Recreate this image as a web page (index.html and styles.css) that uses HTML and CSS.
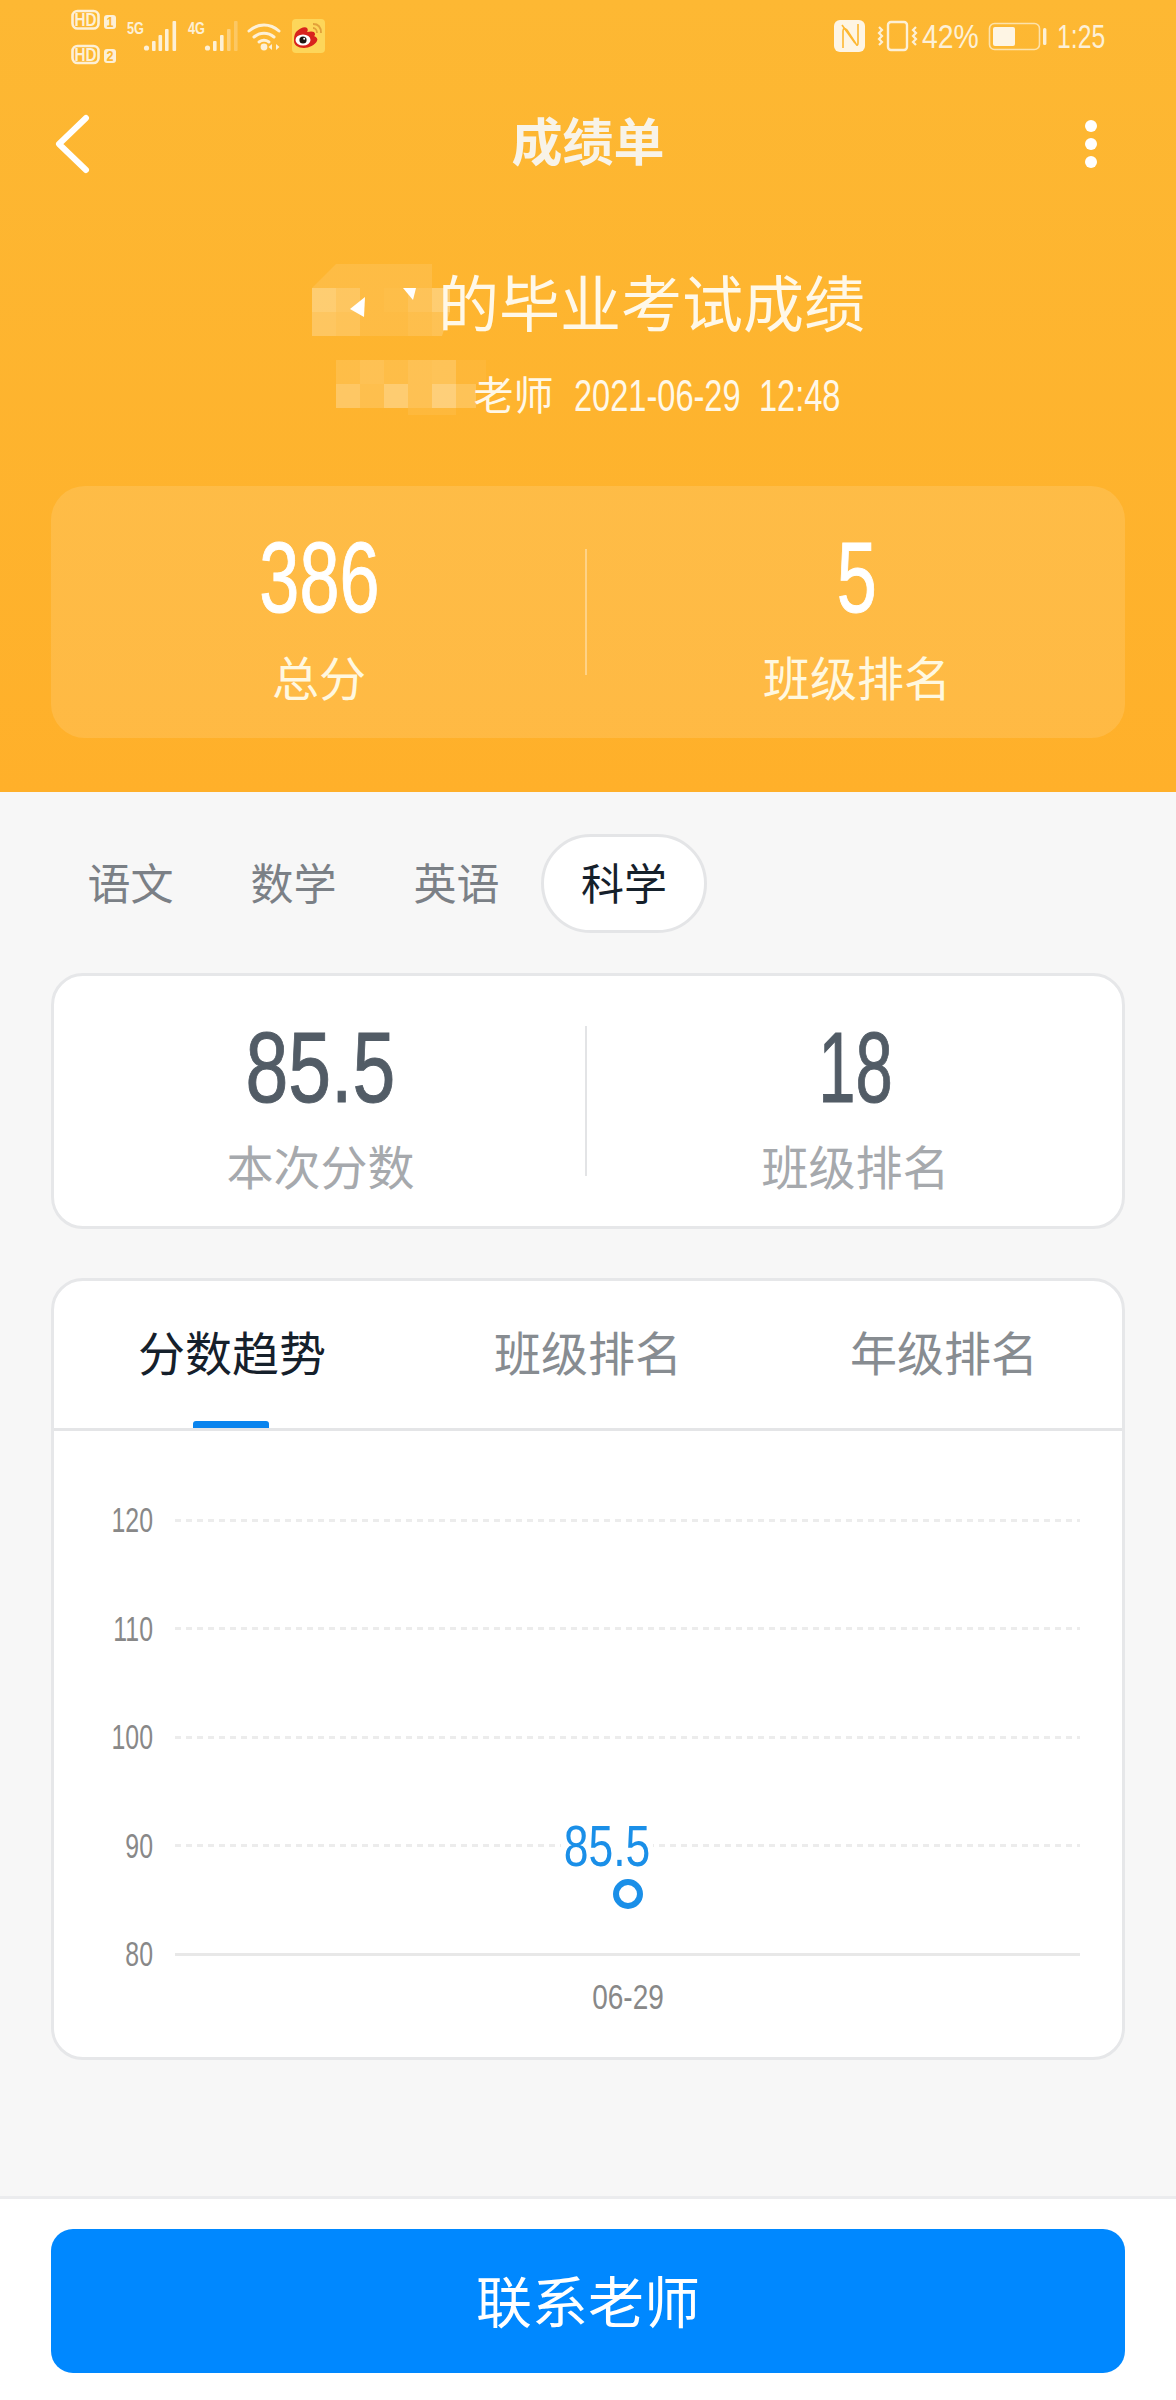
FILE: index.html
```html
<!DOCTYPE html>
<html lang="zh-CN">
<head>
  <meta charset="UTF-8" />
  <meta name="viewport" content="width=device-width, initial-scale=1.0"/>
  <title>成绩单</title>
  <link rel="stylesheet" href="styles.css">
</head>
<body>
  <header class="header">
    <div class="status">
      <svg class="status-left" viewBox="60 0 280 72" width="280" height="72">
        <g fill="none" stroke="#fdf0d6" stroke-width="2.6">
          <rect x="72.5" y="11" width="26" height="17.5" rx="5"/>
          <rect x="72.5" y="46" width="26" height="17" rx="5"/>
        </g>
        <g fill="#fdf0d6">
          <text class="hd" x="74.5" y="25.5" textLength="22" lengthAdjust="spacingAndGlyphs">HD</text>
          <text class="hd" x="74.5" y="60.5" textLength="22" lengthAdjust="spacingAndGlyphs">HD</text>
          <rect x="104" y="15" width="12" height="14" rx="3"/>
          <rect x="104" y="49" width="12" height="14" rx="3"/>
        </g>
        <g fill="#fdb833">
          <text class="sim" x="106.5" y="27" textLength="7" lengthAdjust="spacingAndGlyphs">1</text>
          <text class="sim" x="106.5" y="61" textLength="7" lengthAdjust="spacingAndGlyphs">2</text>
        </g>
        <g fill="#fdf0d6">
          <text class="net" x="127" y="34" textLength="17" lengthAdjust="spacingAndGlyphs">5G</text>
          <circle cx="146.5" cy="48" r="2.6"/>
          <rect x="152" y="41" width="3.6" height="10" rx="1"/>
          <rect x="158.5" y="35" width="3.6" height="16" rx="1"/>
          <rect x="165" y="29" width="3.6" height="22" rx="1"/>
          <rect x="172.5" y="21" width="3.6" height="30" rx="1"/>
          <text class="net" x="188" y="34" textLength="17" lengthAdjust="spacingAndGlyphs">4G</text>
          <circle cx="207.5" cy="48" r="2.6"/>
          <rect x="213" y="41" width="3.6" height="10" rx="1"/>
          <rect x="220" y="35" width="3.6" height="16" rx="1"/>
          <rect x="227" y="29" width="3.6" height="22" rx="1" opacity=".45"/>
          <rect x="234" y="21" width="3.6" height="30" rx="1" opacity=".3"/>
          <circle cx="264" cy="47" r="3.4"/>
          <path d="M272 44v6l-3.5-3zM276 44v6l3.5-3z"/>
        </g>
        <g fill="none" stroke="#fdf0d6" stroke-width="3" stroke-linecap="round">
          <path d="M249 31c9-8 21-8 30 0"/>
          <path d="M254 37c6-5 14-5 20 0"/>
          <path d="M259 42c3-2 7-2 10 0"/>
        </g>
        <rect x="292" y="19" width="33" height="34" rx="4" fill="#fdd65a"/>
        <path d="M296 32c4-4 9-6 11-4c1 1 1 3 0 4c4-1 8-1 8 2c0 1 0 1-1 2c3 1 4 3 3 5c-2 4-8 7-13 7c-6 0-10-3-10-7c0-3 0-6 2-9z" fill="#d8231d"/>
        <ellipse cx="303" cy="40" rx="7.5" ry="5.5" fill="#fff"/>
        <circle cx="303" cy="40" r="3.6" fill="#1c1512"/>
        <circle cx="304.2" cy="38.8" r="1" fill="#fff"/>
        <g fill="none" stroke="#e2a03a" stroke-width="1.8">
          <path d="M313 24c5 0 8 3 8 9"/>
          <path d="M313 28c2 0 4 2 4 5"/>
        </g>
      </svg>
      <div class="status-right">
        <svg class="status-icons" viewBox="830 10 90 50" width="90" height="50">
          <rect x="834" y="20" width="31" height="32" rx="6" fill="#fef5e4"/>
          <g fill="none" stroke="#fdb833" stroke-width="1.6">
            <path d="M843 48V31c0-3 2-3 4-1l9 14c1 2 2 1 2-1V24"/>
            <path d="M842 25l13 18"/>
          </g>
          <rect x="888" y="22" width="19" height="28" rx="3" fill="none" stroke="#fdf0d6" stroke-width="2.4"/>
          <g fill="none" stroke="#fdf0d6" stroke-width="2.2">
            <path d="M879 27l3 3l-3 3l3 3l-3 3l3 3l-3 3"/>
            <path d="M916 27l-3 3l3 3l-3 3l3 3l-3 3l3 3"/>
          </g>
        </svg>
        <span class="status-text batt-text">42%</span>
        <svg class="status-batt" viewBox="985 15 65 45" width="65" height="45">
          <rect x="989.5" y="23.5" width="50" height="26" rx="5" fill="none" stroke="#fde2ab" stroke-width="1.6"/>
          <rect x="993" y="27" width="22" height="19" rx="2" fill="#fef5e4"/>
          <rect x="1043" y="28" width="3.4" height="17" rx="1.5" fill="#fdf0d6"/>
        </svg>
        <span class="status-text time-text">1:25</span>
      </div>
    </div>

    <nav class="nav">
      <svg class="back" viewBox="0 0 36 60" width="36" height="60">
        <polyline points="31,4 4,30 31,56" fill="none" stroke="#fff" stroke-width="6" stroke-linecap="round" stroke-linejoin="round"/>
      </svg>
      <div class="nav-title">成绩单</div>
      <div class="more"><i></i><i></i><i></i></div>
    </nav>

    <div class="heading">
      <svg class="mosaic" viewBox="0 0 144 72" width="144" height="72">
        <g fill="#fff">
          <path d="M24 0H120V24H0z" opacity=".1"/>
          <rect x="0" y="24" width="24" height="24" opacity=".32"/>
          <rect x="24" y="24" width="24" height="24" opacity=".24"/>
          <rect x="48" y="24" width="24" height="24" opacity=".1"/>
          <rect x="72" y="24" width="24" height="24" opacity=".12"/>
          <rect x="96" y="24" width="24" height="24" opacity=".2"/>
          <rect x="120" y="24" width="18" height="24" opacity=".32"/>
          <rect x="0" y="48" width="24" height="24" opacity=".24"/>
          <rect x="24" y="48" width="24" height="24" opacity=".2"/>
          <rect x="48" y="48" width="24" height="24" opacity=".1"/>
          <rect x="72" y="48" width="24" height="24" opacity=".1"/>
          <rect x="96" y="48" width="24" height="24" opacity=".14"/>
          <path d="M120 48h18l-8 24h-10z" opacity=".18"/>
          <path d="M53 33l-1 20l-14-8z"/>
          <path d="M104 24h-13l10 12z"/>
        </g>
      </svg>
      <h1 class="heading-text">的毕业考试成绩</h1>
    </div>
    <div class="meta">
      <svg class="mosaic-small" viewBox="0 0 150 55" width="150" height="55">
        <g fill="#fff">
          <rect x="0" y="0" width="24" height="24" opacity=".12"/>
          <rect x="24" y="0" width="24" height="24" opacity=".18"/>
          <rect x="48" y="0" width="24" height="24" opacity=".12"/>
          <rect x="72" y="0" width="24" height="24" opacity=".18"/>
          <rect x="96" y="0" width="24" height="24" opacity=".2"/>
          <rect x="120" y="0" width="30" height="24" opacity=".05"/>
          <rect x="0" y="24" width="24" height="24" opacity=".26"/>
          <rect x="24" y="24" width="24" height="24" opacity=".15"/>
          <rect x="48" y="24" width="24" height="24" opacity=".32"/>
          <rect x="72" y="24" width="24" height="24" opacity=".18"/>
          <rect x="96" y="24" width="24" height="24" opacity=".36"/>
          <rect x="120" y="24" width="20" height="24" opacity=".2"/>
          <rect x="72" y="48" width="48" height="7" opacity=".07"/>
        </g>
      </svg>
      <span class="meta-name">老师</span>
      <span class="meta-date">2021-06-29</span>
      <span class="meta-time">12:48</span>
    </div>

    <section class="summary">
      <div class="stat">
        <div class="stat-num"><span class="num">386</span></div>
        <div class="stat-label">总分</div>
      </div>
      <div class="summary-line"></div>
      <div class="stat">
        <div class="stat-num"><span class="num">5</span></div>
        <div class="stat-label">班级排名</div>
      </div>
    </section>
  </header>

  <main class="main">
    <div class="subjects">
      <div class="subject">语文</div>
      <div class="subject">数学</div>
      <div class="subject">英语</div>
      <div class="subject active">科学</div>
    </div>

    <section class="card score">
      <div class="stat">
        <div class="stat-num"><span class="num wide">85.5</span></div>
        <div class="stat-label">本次分数</div>
      </div>
      <div class="score-line"></div>
      <div class="stat">
        <div class="stat-num"><span class="num tight">18</span></div>
        <div class="stat-label">班级排名</div>
      </div>
    </section>

    <section class="card trend">
      <div class="trend-tabs">
        <div class="trend-tab active">分数趋势</div>
        <div class="trend-tab">班级排名</div>
        <div class="trend-tab">年级排名</div>
      </div>
      <div class="chart">
        <div class="chart-row"><span class="axis">120</span><div class="grid-line"></div></div>
        <div class="chart-row"><span class="axis">110</span><div class="grid-line"></div></div>
        <div class="chart-row"><span class="axis">100</span><div class="grid-line"></div></div>
        <div class="chart-row"><span class="axis">90</span><div class="grid-line"></div></div>
        <div class="chart-row"><span class="axis">80</span><div class="base-line"></div></div>
        <div class="point-value">85.5</div>
        <div class="point"></div>
        <div class="point-date">06-29</div>
      </div>
    </section>
  </main>

  <footer class="footer">
    <button type="button" class="btn">联系老师</button>
  </footer>
</body>
</html>
```

FILE: styles.css
```css
* { box-sizing: border-box; }
body { margin: 0; width: 1176px; height: 2400px; display: flex; flex-direction: column; background: #f7f7f7; font-family: "Liberation Sans", "Noto Sans CJK SC", sans-serif; }

.header { height: 792px; flex: none; background: linear-gradient(180deg, #fdb833 0%, #ffb02a 100%); color: #fff; }

.status { height: 72px; display: flex; justify-content: space-between; }
.status-left { margin-left: 60px; }
.status-left text { font-family: "Liberation Sans", sans-serif; font-weight: bold; }
.hd { font-size: 19px; }
.sim { font-size: 14px; }
.net { font-size: 17px; }
.status-right { display: flex; align-items: flex-start; padding-right: 71px; }
.status-icons { margin-top: 10px; }
.status-batt { margin-top: 15px; margin-left: 6px; }
.status-text { display: block; margin-top: 20px; font-size: 33px; line-height: 33px; color: #fdf0d6; white-space: nowrap; transform-origin: left center; }
.batt-text { width: 57px; margin-left: 2px; transform: scaleX(.86); }
.time-text { width: 48px; margin-left: 7px; transform: scaleX(.75); }

.nav { height: 144px; display: grid; grid-template-columns: 1fr auto 1fr; align-items: center; padding: 0 67px; }
.back { margin-left: -12px; }
.nav-title { font-size: 51px; font-weight: bold; color: #f8f3e8; line-height: 66px; }
.more { justify-self: end; margin-right: 12px; display: flex; flex-direction: column; gap: 6px; }
.more i { display: block; width: 12px; height: 12px; border-radius: 50%; background: #fff; }

.heading { margin-top: 48px; height: 80px; display: flex; justify-content: center; padding-left: 4px; }
.mosaic { margin: 0 -18px 0 -3px; }
.heading-text { margin: 0; font-size: 61px; font-weight: normal; line-height: 84px; color: #fff8e8; }

.meta { margin-top: 16px; height: 72px; display: flex; justify-content: center; line-height: 72px; color: #fff8e8; white-space: nowrap; padding-right: 3px; }
.mosaic-small { margin-right: -12px; }
.meta-name { font-size: 40px; position: relative; }
.meta-date { width: 166px; margin-left: 20px; font-size: 44px; transform: scaleX(.74); transform-origin: left center; }
.meta-time { width: 79px; margin-left: 19px; font-size: 44px; transform: scaleX(.74); transform-origin: left center; }

.summary { margin: 54px 51px 0; height: 252px; display: flex; border-radius: 34px; background: rgba(255,255,255,.12); }
.summary-line { width: 2px; height: 126px; align-self: center; margin: 0 2px 0 -2px; background: rgba(255,255,255,.35); }
.stat { flex: 1; text-align: center; padding-top: 41px; }
.stat-num { font-size: 100px; line-height: 100px; }
.num { display: inline-block; transform: scaleX(.72); -webkit-text-stroke: 1px currentColor; }
.num.wide { transform: scaleX(.77); }
.num.tight { transform: scaleX(.67); }
.stat-label { margin-top: 23px; font-size: 47px; line-height: 60px; color: #fff8e0; }

.main { flex: 1; padding-top: 42px; }
.subjects { display: flex; padding-left: 49px; }
.subject { width: 163px; height: 99px; line-height: 97px; text-align: center; font-size: 43px; color: #7b8086; border: 3px solid transparent; border-radius: 50px; }
.subject.active { width: 166px; margin-left: 3px; background: #fff; border-color: #e4e5e7; color: #15202b; }

.card { margin: 0 51px; background: #fff; border: 3px solid #e6e7e9; border-radius: 32px; }
.score { margin-top: 40px; height: 256px; display: flex; }
.score .stat { padding-top: 41px; }
.score .stat-num { color: #525c66; }
.score .stat-label { margin-top: 22px; color: #a6a9ad; }
.score-line { width: 2px; height: 150px; align-self: center; margin: 0 2px 0 -2px; background: #e3e4e6; }

.trend { margin-top: 49px; height: 782px; overflow: hidden; }
.trend-tabs { height: 150px; display: flex; border-bottom: 3px solid #e4e5e7; }
.trend-tab { flex: 1; position: relative; text-align: center; font-size: 47px; line-height: 148px; color: #878c91; }
.trend-tab.active { color: #15202b; }
.trend-tab.active::after { content: ""; position: absolute; left: 50%; bottom: 0; width: 76px; height: 7px; margin-left: -39px; border-radius: 3px 3px 0 0; background: #0a84ee; }

.chart { position: relative; padding: 35px 42px 0 0; }
.chart-row { height: 108.5px; display: flex; align-items: center; }
.axis { width: 99px; flex: none; text-align: right; font-size: 35px; color: #888; transform: scaleX(.71); transform-origin: right center; }
.grid-line { flex: 1; margin-left: 22px; height: 3px; background: repeating-linear-gradient(90deg, #ececec 0 6px, transparent 6px 11px); }
.base-line { flex: 1; margin-left: 22px; height: 3px; background: #e8e8e8; }

.point-value { position: absolute; left: 494px; top: 387px; width: 118px; background: #fff; text-align: center; white-space: nowrap; font-size: 57px; line-height: 57px; color: #1a8fe8; transform: scaleX(.78); }
.point { position: absolute; left: 559px; top: 448px; width: 30px; height: 30px; border: 6px solid #1a8fe8; border-radius: 50%; background: #fff; }
.point-date { position: absolute; left: 524px; top: 548px; width: 100px; text-align: center; font-size: 35px; line-height: 35px; color: #888; transform: scaleX(.8); }

.footer { height: 204px; flex: none; padding: 30px 51px 0; background: #fff; border-top: 3px solid #ebecee; }
.btn { display: block; width: 100%; height: 144px; padding: 0 0 6px; border: 0; border-radius: 22px; background: #0088ff; color: #fff; font-family: inherit; font-size: 56px; }
```
